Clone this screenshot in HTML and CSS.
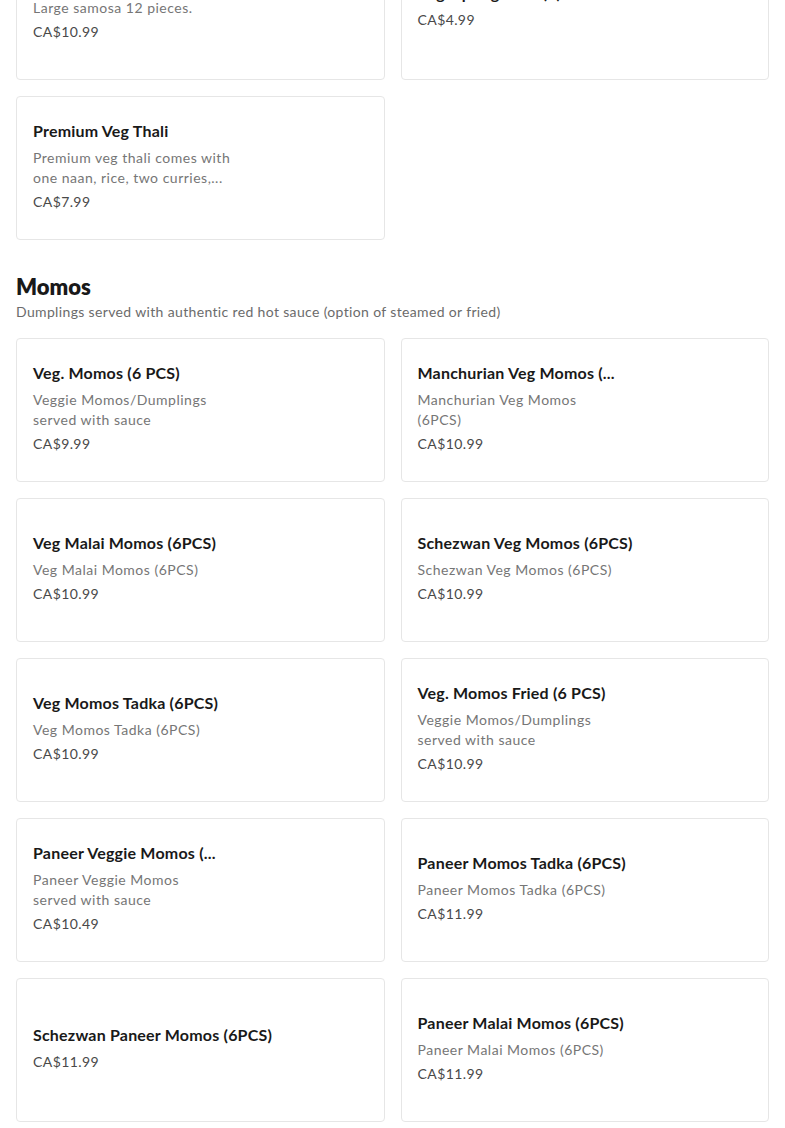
FILE: index.html
```html
<!DOCTYPE html>
<html lang="en">
<head>
<meta charset="utf-8">
<title>Menu</title>
<link rel="stylesheet" href="styles.css">
</head>
<body>
<main class="menu">
  <section class="section section--first">
    <div class="grid">
      <article class="card">
        <div class="card-body">
          <h3 class="item-title">Samosa (12 pcs)</h3>
          <p class="item-desc">Large samosa 12 pieces.</p>
          <p class="item-price">CA$10.99</p>
        </div>
      </article>
      <article class="card">
        <div class="card-body">
          <h3 class="item-title">Veg. Spring Rolls (2)</h3>
          <p class="item-price">CA$4.99</p>
        </div>
      </article>
      <article class="card">
        <div class="card-body">
          <h3 class="item-title">Premium Veg Thali</h3>
          <p class="item-desc">Premium veg thali comes with one naan, rice, two curries,...</p>
          <p class="item-price">CA$7.99</p>
        </div>
      </article>
    </div>
  </section>

  <section class="section">
    <header class="section-head">
      <h2 class="section-title">Momos</h2>
      <p class="section-sub">Dumplings served with authentic red hot sauce (option of steamed or fried)</p>
    </header>
    <div class="grid">
      <article class="card">
        <div class="card-body">
          <h3 class="item-title">Veg. Momos (6 PCS)</h3>
          <p class="item-desc">Veggie Momos/Dumplings served with sauce</p>
          <p class="item-price">CA$9.99</p>
        </div>
      </article>
      <article class="card">
        <div class="card-body">
          <h3 class="item-title">Manchurian Veg Momos (...</h3>
          <p class="item-desc">Manchurian Veg Momos (6PCS)</p>
          <p class="item-price">CA$10.99</p>
        </div>
      </article>
      <article class="card">
        <div class="card-body">
          <h3 class="item-title">Veg Malai Momos (6PCS)</h3>
          <p class="item-desc">Veg Malai Momos (6PCS)</p>
          <p class="item-price">CA$10.99</p>
        </div>
      </article>
      <article class="card">
        <div class="card-body">
          <h3 class="item-title">Schezwan Veg Momos (6PCS)</h3>
          <p class="item-desc">Schezwan Veg Momos (6PCS)</p>
          <p class="item-price">CA$10.99</p>
        </div>
      </article>
      <article class="card">
        <div class="card-body">
          <h3 class="item-title">Veg Momos Tadka (6PCS)</h3>
          <p class="item-desc">Veg Momos Tadka (6PCS)</p>
          <p class="item-price">CA$10.99</p>
        </div>
      </article>
      <article class="card">
        <div class="card-body">
          <h3 class="item-title">Veg. Momos Fried (6 PCS)</h3>
          <p class="item-desc">Veggie Momos/Dumplings served with sauce</p>
          <p class="item-price">CA$10.99</p>
        </div>
      </article>
      <article class="card">
        <div class="card-body">
          <h3 class="item-title">Paneer Veggie Momos (...</h3>
          <p class="item-desc">Paneer Veggie Momos<br>served with sauce</p>
          <p class="item-price">CA$10.49</p>
        </div>
      </article>
      <article class="card">
        <div class="card-body">
          <h3 class="item-title">Paneer Momos Tadka (6PCS)</h3>
          <p class="item-desc">Paneer Momos Tadka (6PCS)</p>
          <p class="item-price">CA$11.99</p>
        </div>
      </article>
      <article class="card">
        <div class="card-body">
          <h3 class="item-title">Schezwan Paneer Momos (6PCS)</h3>
          <p class="item-price">CA$11.99</p>
        </div>
      </article>
      <article class="card">
        <div class="card-body">
          <h3 class="item-title">Paneer Malai Momos (6PCS)</h3>
          <p class="item-desc">Paneer Malai Momos (6PCS)</p>
          <p class="item-price">CA$11.99</p>
        </div>
      </article>
    </div>
  </section>
</main>
</body>
</html>
```

FILE: styles.css
```css
* {
  box-sizing: border-box;
}

html,
body {
  margin: 0;
  padding: 0;
  background: #ffffff;
}

body {
  font-family: Lato, "Noto Sans", "Liberation Sans", sans-serif;
  color: #191919;
  overflow: hidden;
}

.menu {
  padding: 0 16px;
}

.section--first {
  margin-top: -64px;
}

.section-head {
  padding-top: 32px;
  padding-bottom: 16px;
}

.section-title {
  margin: 0;
  font-size: 22px;
  line-height: 30px;
  font-weight: 800;
  color: #191919;
}

.section-sub {
  margin: 0;
  font-size: 14px;
  line-height: 20px;
  color: #6b6b6b;
  letter-spacing: 0.35px;
}

.grid {
  display: grid;
  grid-template-columns: 1fr 1fr;
  gap: 16px;
}

.card {
  height: 144px;
  border: 1px solid #e6e6e6;
  border-radius: 4px;
  background: #ffffff;
  display: flex;
  align-items: center;
  padding: 0 16px 5px;
}

.card-body {
  display: flex;
  flex-direction: column;
  gap: 4px;
}

.item-title {
  margin: 0 0 1px;
  font-size: 16px;
  line-height: 24px;
  font-weight: 700;
  color: #191919;
  white-space: nowrap;
  letter-spacing: 0.2px;
}

.item-desc {
  margin: 0;
  max-width: 200px;
  font-size: 14px;
  line-height: 20px;
  color: #767676;
  letter-spacing: 0.5px;
}

.item-price {
  margin: 0;
  font-size: 14px;
  line-height: 20px;
  color: #494949;
  letter-spacing: 0.4px;
}
```
